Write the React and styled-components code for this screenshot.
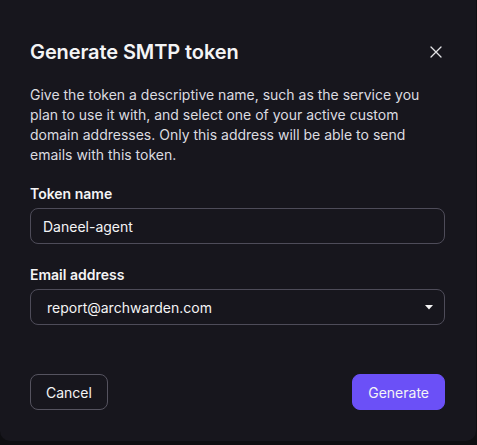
import React, { useState } from 'react';
import styled, { createGlobalStyle } from 'styled-components';

const GlobalStyle = createGlobalStyle`
  html, body {
    margin: 0;
    padding: 0;
    background: #0e0e11;
    font-family: Inter, "Noto Sans", sans-serif;
    -webkit-font-smoothing: antialiased;
  }
`;

const Panel = styled.div`
  box-sizing: border-box;
  width: 476px;
  height: 441px;
  background: #17161d;
  border-radius: 0 0 10px 10px;
  padding: 37px 31px 0 30px;
  display: flex;
  flex-direction: column;
  color: #f4f4f5;
`;

const Header = styled.div`
  display: flex;
  justify-content: space-between;
  align-items: center;
`;

const Title = styled.h2`
  margin: 0;
  font-size: 20px;
  line-height: 30px;
  font-weight: 600;
  letter-spacing: -0.1px;
`;

const CloseButton = styled.button`
  background: none;
  border: none;
  padding: 0;
  margin-right: 1px;
  width: 16px;
  height: 16px;
  display: flex;
  align-items: center;
  justify-content: center;
  color: #e4e4e7;
  cursor: pointer;
`;

const Description = styled.p`
  margin: 18px 0 0;
  font-size: 14px;
  line-height: 20px;
  color: #dcdce0;
`;

const Field = styled.div`
  margin-top: ${(p) => p.$top}px;
  display: flex;
  flex-direction: column;
  gap: 4px;
`;

const Label = styled.label`
  font-size: 14px;
  line-height: 20px;
  font-weight: 600;
  color: #f4f4f5;
`;

const Input = styled.input`
  box-sizing: border-box;
  height: 36px;
  width: 100%;
  background: transparent;
  border: 1px solid #4e4c59;
  border-radius: 8px;
  padding: 0 12px;
  font-family: inherit;
  font-size: 14px;
  color: #f4f4f5;
  outline: none;
`;

const Select = styled.div`
  box-sizing: border-box;
  height: 36px;
  width: 100%;
  border: 1px solid #4e4c59;
  border-radius: 8px;
  padding: 0 11px 0 16px;
  display: flex;
  align-items: center;
  justify-content: space-between;
  font-size: 14px;
  color: #f4f4f5;
`;

const Footer = styled.div`
  margin-top: 49px;
  display: flex;
  justify-content: space-between;
`;

const Button = styled.button`
  box-sizing: border-box;
  height: 36px;
  padding: 0 15px;
  border-radius: 8px;
  font-family: inherit;
  font-size: 14px;
  cursor: pointer;
  border: 1px solid ${(p) => (p.$primary ? '#6b50f7' : '#55535f')};
  background: ${(p) => (p.$primary ? '#6b50f7' : 'transparent')};
  color: #f4f4f5;
`;

const App = () => {
  const [name, setName] = useState('Daneel-agent');

  return (
    <>
      <GlobalStyle />
      <Panel>
        <Header>
          <Title>Generate SMTP token</Title>
          <CloseButton aria-label="Close">
            <svg width="12" height="12" viewBox="0 0 12 12" fill="none">
              <path d="M1 1L11 11M11 1L1 11" stroke="currentColor" strokeWidth="1.3" strokeLinecap="round" />
            </svg>
          </CloseButton>
        </Header>
        <Description>
          Give the token a descriptive name, such as the service you plan to use it with, and select one of your
          active custom domain addresses. Only this address will be able to send emails with this token.
        </Description>
        <Field $top={19}>
          <Label>Token name</Label>
          <Input value={name} onChange={(e) => setName(e.target.value)} />
        </Field>
        <Field $top={21}>
          <Label>Email address</Label>
          <Select>
            <span>report@archwarden.com</span>
            <svg width="8" height="5" viewBox="0 0 8 5">
              <path d="M0 0H8L4 4.5Z" fill="#f4f4f5" />
            </svg>
          </Select>
        </Field>
        <Footer>
          <Button>Cancel</Button>
          <Button $primary>Generate</Button>
        </Footer>
      </Panel>
    </>
  );
};

export default App;
